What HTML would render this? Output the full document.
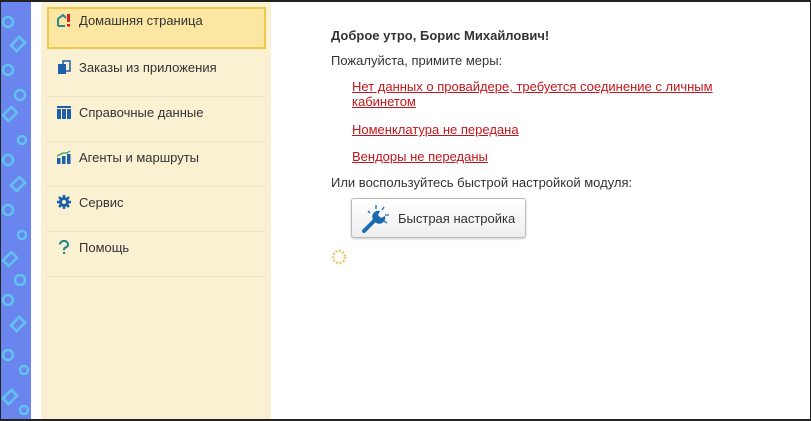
<!DOCTYPE html>
<html><head><meta charset="utf-8"><style>
*{margin:0;padding:0;box-sizing:border-box}
body{width:811px;height:421px;overflow:hidden;background:#fff;font-family:"Liberation Sans",Arial,sans-serif;font-size:13px;color:#333;position:relative}
.frame{position:absolute;inset:0;border:1px solid #222;border-top:2px solid #222;border-bottom:2px solid #222;pointer-events:none;z-index:9}
.strip{position:absolute;left:0;top:0;width:31px;height:421px;background:#6a86ee;overflow:hidden}
.gap{position:absolute;left:31px;top:0;width:10px;height:421px;background:#fff}
.side{position:absolute;left:41px;top:0;width:230px;height:421px;background:#faf1d3}
.item{position:absolute;left:6px;width:219px;height:45px;border-bottom:1px solid #efe4c2}
.item span{position:absolute;left:32px;top:8px}
.item .ic{position:absolute;left:10px;top:8px;width:14px;height:14px}
.sel{background:#fbe7a2;border:2px solid #ecc84c;height:42px}
.sel span{left:30px;top:4px}
.sel .ic{left:8px;top:4px}
.main{position:absolute;left:331px;top:0}
a{color:#c4161c;text-decoration:underline}
.btn{position:absolute;left:351px;top:198px;width:175px;height:40px;border:1px solid #bbb;border-radius:3px;background:linear-gradient(#fff,#eee);box-shadow:0 1px 2px rgba(0,0,0,.2)}
.btn span{position:absolute;left:46px;top:12px;font-size:13px}
</style></head><body>
<div class="strip"><svg width="31" height="421">
<g fill="none" stroke="#5fd0f0" stroke-width="2.5" opacity=".8">
<circle cx="8" cy="22" r="5"/><rect x="12" y="40" width="12" height="8" transform="rotate(-45 18 44)"/><circle cx="8" cy="70" r="5"/><circle cx="20" cy="95" r="5"/><rect x="4" y="110" width="12" height="8" transform="rotate(-45 10 114)"/><circle cx="22" cy="140" r="4"/><circle cx="8" cy="160" r="5"/><rect x="12" y="180" width="12" height="8" transform="rotate(-45 18 184)"/><circle cx="8" cy="210" r="5"/><circle cx="22" cy="235" r="4"/><rect x="4" y="255" width="12" height="8" transform="rotate(-45 10 259)"/><circle cx="20" cy="280" r="5"/><circle cx="8" cy="300" r="5"/><rect x="12" y="320" width="12" height="8" transform="rotate(-45 18 324)"/><circle cx="8" cy="355" r="5"/><circle cx="24" cy="370" r="4"/><rect x="4" y="393" width="12" height="8" transform="rotate(-45 10 397)"/><circle cx="24" cy="410" r="4"/>
</g></svg></div>
<div class="gap"></div>
<div class="side">
<div class="item sel" style="top:7px"><svg class="ic" viewBox="0 0 14 14"><path d="M1 13V6l5-4 3 3" fill="none" stroke="#2a8a8a" stroke-width="2"/><path d="M1 13h7" stroke="#2a8a8a" stroke-width="2"/><rect x="10" y="1" width="3" height="8" fill="#d8261c"/><rect x="10" y="11" width="3" height="2.5" fill="#d8261c"/></svg><span>Домашняя страница</span></div>
<div class="item" style="top:52px"><svg class="ic" viewBox="0 0 14 14"><rect x="1" y="4" width="8" height="10" fill="#1d5fa8"/><rect x="6" y="1" width="7" height="10" fill="none" stroke="#1d5fa8" stroke-width="1.5"/></svg><span>Заказы из приложения</span></div>
<div class="item" style="top:97px"><svg class="ic" viewBox="0 0 14 14"><rect x="0" y="1" width="14" height="13" fill="#1d5fa8"/><path d="M4.5 4v10M9.5 4v10M0 3.5h14" stroke="#faf1d3" stroke-width="1"/></svg><span>Справочные данные</span></div>
<div class="item" style="top:142px"><svg class="ic" viewBox="0 0 14 14"><rect x="0" y="8" width="3.5" height="6" fill="#1d5fa8"/><rect x="5" y="6" width="3.5" height="8" fill="#1d5fa8"/><rect x="10" y="4" width="3.5" height="10" fill="#1d5fa8"/><path d="M0 6l6-3 4 0 3-2" fill="none" stroke="#2fa05a" stroke-width="1.3"/></svg><span>Агенты и маршруты</span></div>
<div class="item" style="top:187px"><svg class="ic" viewBox="0 0 14 14"><circle cx="7" cy="7" r="5" fill="#1d5fa8"/><path d="M7 0v14M0 7h14M2 2l10 10M12 2L2 12" stroke="#1d5fa8" stroke-width="2.5"/><circle cx="7" cy="7" r="2" fill="#faf1d3"/></svg><span>Сервис</span></div>
<div class="item" style="top:232px"><svg class="ic" viewBox="0 0 14 14"><path d="M3 4.5a4 3.5 0 1 1 5 3.3c-1 .6-1 1.2-1 2.5" fill="none" stroke="#2a8a8a" stroke-width="2.2"/><rect x="6" y="12" width="2.2" height="2.2" fill="#2a8a8a"/></svg><span>Помощь</span></div>
</div>
<div class="main">
<div style="position:absolute;top:28px;white-space:nowrap;font-weight:bold;color:#333">Доброе утро, Борис Михайлович!</div>
<div style="position:absolute;top:53px;white-space:nowrap">Пожалуйста, примите меры:</div>
<div style="position:absolute;left:21px;top:79px;width:380px;line-height:15px"><a>Нет данных о провайдере, требуется соединение с личным кабинетом</a></div>
<div style="position:absolute;left:21px;top:122px;white-space:nowrap"><a>Номенклатура не передана</a></div>
<div style="position:absolute;left:21px;top:149px;white-space:nowrap"><a>Вендоры не переданы</a></div>
<div style="position:absolute;top:175px;white-space:nowrap">Или воспользуйтесь быстрой настройкой модуля:</div>
</div>
<div class="btn"><svg style="position:absolute;left:8px;top:4px" width="32" height="32" viewBox="0 0 32 32"><path d="M4 28L16 16" stroke="#1d6ab0" stroke-width="4" stroke-linecap="round"/><path d="M14 18a6 6 0 0 1 6-10l-2 4 3 3 4-2a6 6 0 0 1-10 6z" fill="#1d6ab0"/><path d="M16 2v4M24 4l-2 3M29 12h-4M8 8l2 2M27 20l-3-2" stroke="#1d6ab0" stroke-width="1.3"/></svg><span>Быстрая настройка</span></div>
<svg style="position:absolute;left:331px;top:249px" width="16" height="16" viewBox="0 0 16 16"><circle cx="8" cy="8" r="6" fill="none" stroke="#e8c870" stroke-width="2.5" stroke-dasharray="2 1.5"/></svg>
<div class="frame"></div>
</body></html>
